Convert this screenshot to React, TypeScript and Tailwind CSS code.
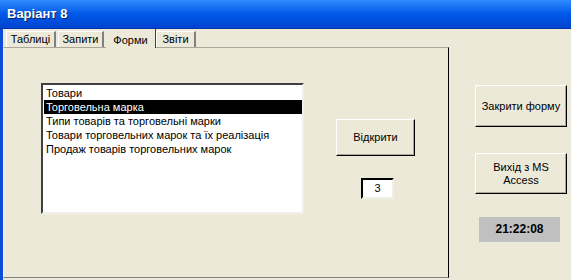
import React from "react";

const items = [
  "Товари",
  "Торговельна марка",
  "Типи товарів та торговельні марки",
  "Товари торговельних марок та їх реалізація",
  "Продаж товарів торговельних марок",
];

const tabs = ["Таблиці", "Запити", "Форми", "Звіти"];

function Btn({ children, className }: { children: React.ReactNode; className: string }) {
  return (
    <div
      className={`flex items-center justify-center text-center leading-[13px] bg-[#ece9d8] border border-t-white border-l-white border-r-black border-b-black shadow-[inset_-1px_-1px_0_#aca899] ${className}`}
    >
      {children}
    </div>
  );
}

export default function App() {
  return (
    <div
      className="w-[571px] h-[280px] overflow-hidden bg-[#ece9d8] text-black text-[11px] flex flex-col"
      style={{ fontFamily: '"Liberation Sans", Arial, sans-serif' }}
    >
      {/* Title bar */}
      <div className="h-[29px] shrink-0 flex items-center pl-[7px] bg-gradient-to-b from-[#2f8bff] via-[#0058e8] to-[#0044d0] border-b border-[#0032a8]">
        <span className="text-white font-bold text-[13px] [text-shadow:1px_1px_0_#0a246a]">Варіант 8</span>
      </div>

      <div className="flex flex-1 border-l-[3px] border-[#0d4ed8]">
        {/* Tabs + panel */}
        <div className="flex flex-col">
          <div className="flex items-end h-[18px] pl-[3px]">
            {tabs.map((t) =>
              t === "Форми" ? (
                <div
                  key={t}
                  className="h-[19px] w-[50px] -mb-px z-10 flex items-start justify-center pt-[3px] bg-[#ece9d8] border-r border-r-[#404040]"
                >
                  {t}
                </div>
              ) : (
                <div
                  key={t}
                  className={`h-[16px] flex items-center justify-center bg-[#ece9d8] border-t border-l border-t-white border-l-white border-r-2 border-r-[#808080] mr-[2px] ${
                    t === "Таблиці" ? "w-[50px]" : t === "Запити" ? "w-[46px]" : "w-[40px]"
                  }`}
                >
                  {t}
                </div>
              )
            )}
          </div>

          <div className="w-[446px] h-[231px] flex items-start border border-t-[#aca899] border-l-[#f5f4ee] border-r-black border-b-[#808080]">
            {/* Listbox */}
            <div className="ml-[37px] mt-[35px] w-[263px] h-[131px] bg-white border-2 border-t-[#404040] border-l-[#404040] border-r-[#f0efe8] border-b-[#f0efe8] pt-[1px] pl-px">
              {items.map((it, i) => (
                <div
                  key={it}
                  className={`h-[14px] leading-[14px] pl-[2px] whitespace-nowrap ${
                    i === 1 ? "bg-black text-white" : ""
                  }`}
                >
                  {it}
                </div>
              ))}
            </div>

            <div className="ml-[32px] mt-[71px] flex flex-col">
              <Btn className="w-[79px] h-[37px]">Відкрити</Btn>
              <div className="ml-[25px] mt-[22px] w-[33px] h-[21px] bg-white border-2 border-t-black border-l-black border-r-[#f0efe8] border-b-[#f0efe8] flex items-center justify-center">
                3
              </div>
            </div>
          </div>
        </div>

        {/* Right column */}
        <div className="ml-[26px] mt-[56px] flex flex-col">
          <Btn className="w-[92px] h-[42px]">Закрити форму</Btn>
          <Btn className="w-[92px] h-[41px] mt-[26px]">
            Вихід з MS
            <br />
            Access
          </Btn>
          <div className="ml-[4px] mt-[23px] w-[81px] h-[25px] bg-[#c0c0c0] flex justify-center pt-[3px] font-bold text-[12px]">
            21:22:08
          </div>
        </div>
      </div>
    </div>
  );
}
